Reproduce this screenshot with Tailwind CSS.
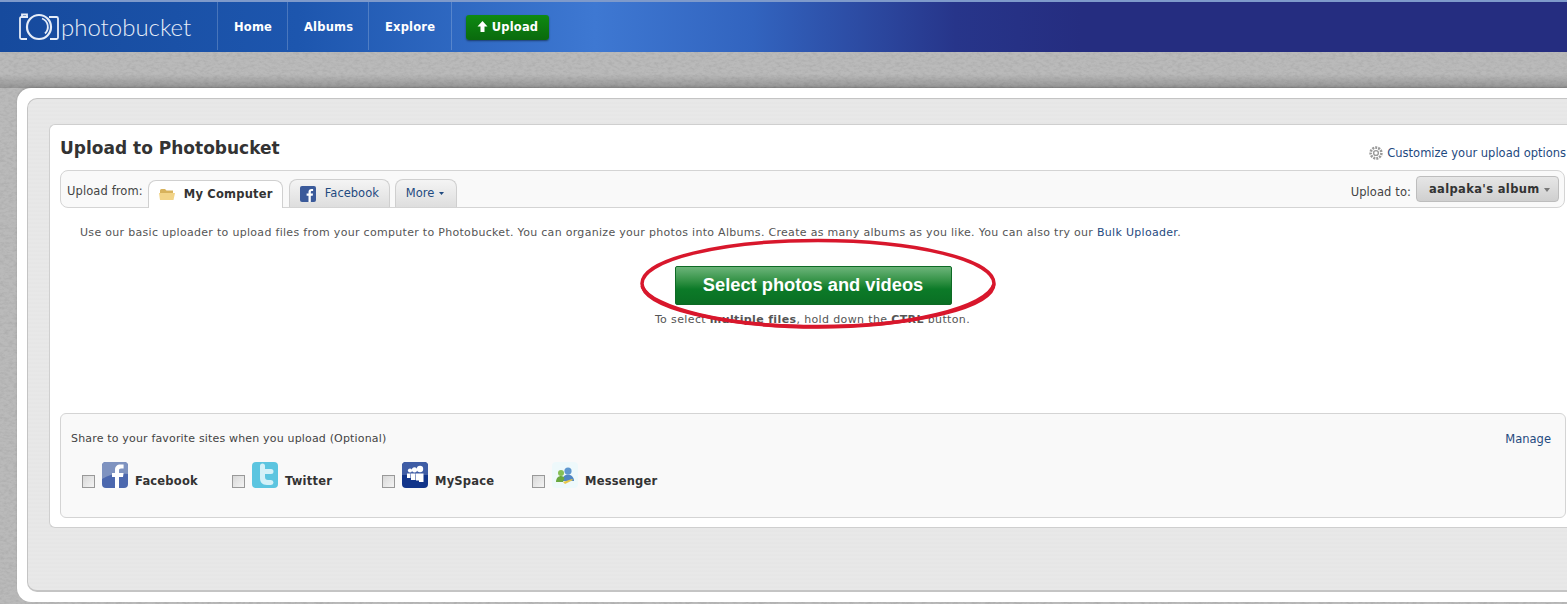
<!DOCTYPE html>
<html lang="en">
<head>
<meta charset="utf-8">
<title>Upload to Photobucket</title>
<script src="https://cdn.jsdelivr.net/npm/@tailwindcss/browser@4"></script>
</head>
<body class="relative w-[1567px] h-[604px] overflow-hidden bg-[#bababa] font-['DejaVu_Sans',sans-serif] text-[#444]">
<svg class="absolute inset-0 pointer-events-none" width="1567" height="604" aria-hidden="true">
  <defs>
    <filter id="grain" x="0" y="0" width="100%" height="100%">
      <feTurbulence type="fractalNoise" baseFrequency="0.22 0.4" numOctaves="5" seed="7"/>
      <feColorMatrix type="matrix" values="0 0 0 0 0.4  0 0 0 0 0.4  0 0 0 0 0.4  1.6 0 0 0 -0.62"/>
    </filter>
    <linearGradient id="fade" x1="0" y1="0" x2="0" y2="1">
      <stop offset="0" stop-color="#000" stop-opacity="0"/>
      <stop offset="1" stop-color="#000" stop-opacity=".2"/>
    </linearGradient>
  </defs>
  <rect width="1567" height="604" filter="url(#grain)"/>
  <rect y="74" width="1567" height="14" fill="url(#fade)"/>
</svg>

<header class="relative h-[52px] border-t-2 border-[#7e9acb] bg-[linear-gradient(90deg,#164a9d_0%,#1d56ae_19%,#3e78d2_38%,#3264bf_48%,#27358a_61%,#252d80_69%,#252d80_100%)] flex items-center">
  <div class="w-[217px] h-full flex items-center pl-[19px] gap-[2px] shrink-0">
    <svg width="40" height="28" viewBox="0 0 40 28" fill="none" stroke="#e6edf8" stroke-width="1.800" class="shrink-0">
      <path d="M9 4H2.500Q1 4 1 5.500V24.500Q1 26 2.500 26H8M30 4H37.500Q39 4 39 5.500V24.500Q39 26 37.500 26H31M3 4V1.500H8V4"/>
      <circle cx="20" cy="14" r="12" stroke-width="2.200"/>
      <path d="M23 5.500a9 9 0 0 1 3 15" stroke-width="1.800"/>
    </svg>
    <span class="font-['Lato',sans-serif] font-light text-[24px] leading-none text-[#e6edf8]">photobucket</span>
  </div>
  <nav class="flex h-[48px] text-white font-bold text-[11.500px] tracking-[0.2px] self-start">
    <a class="w-[70px] border-l border-white/20 flex items-center pl-[16px] pt-[3px]">Home</a>
    <a class="w-[81px] border-l border-white/20 flex items-center pl-[16px] pt-[3px]">Albums</a>
    <a class="w-[83px] border-l border-white/20 flex items-center pl-[16px] pt-[3px]">Explore</a>
    <div class="border-l border-white/20 flex items-center pl-[14px]">
      <button class="w-[83px] h-[25px] mt-[3px] rounded-[3px] bg-[linear-gradient(#0e8a12,#0a6a0d)] shadow-[0_1px_2px_rgba(0,0,0,.45)] flex items-center justify-center gap-[4px] font-bold text-[11.500px] text-white">
        <svg width="11" height="11" viewBox="0 0 11 11" fill="#fff" class="-mt-[3px]"><path d="M5.500 0 10.500 5.500H7.500V11H3.500V5.500H.5Z"/></svg>
        Upload
      </button>
    </div>
  </nav>
</header>

<main class="relative mt-[36px] ml-[17px] h-[514px] rounded-l-[14px] bg-white pt-[10px] pl-[10px] pb-[10px] shadow-[0_-1px_2px_rgba(0,0,0,.15)]">
  <div class="h-full rounded-l-[10px] border-t border-l border-b-2 border-[#c4c4c4] bg-[repeating-linear-gradient(0deg,#e8e8e8_0px,#e8e8e8_2px,#e4e4e4_3px,#e9e9e9_4px)] pt-[25px] pl-[21px]">
    <section class="relative h-[404px] bg-white rounded-l-[6px] border-t border-l border-b border-[#cfcfcf] pl-[10px] pr-[1px]">
      <div class="h-[45px] flex items-start justify-between">
        <h1 class="mt-[11px] font-bold text-[17px] leading-[24px] text-[#333]">Upload to Photobucket</h1>
        <a class="mt-[19px] flex items-center gap-[4px] text-[11.500px] leading-[18px] text-[#1f4a80]">
          <svg width="14" height="14" viewBox="0 0 14 14" fill="none" stroke="#9a9a9a">
            <circle cx="7" cy="7" r="5.400" stroke-width="2.600" stroke-dasharray="2 1"/>
            <circle cx="7" cy="7" r="2.400" stroke-width="1.400"/>
          </svg>
          Customize your upload options
        </a>
      </div>
      <div class="h-[38px] rounded-[8px] border border-[#d4d4d4] bg-[#f9f9f9] flex items-end justify-between pl-[6px] pr-[5px] mr-[1px]">
        <div class="flex items-end h-full">
          <span class="self-start mt-[13px] text-[11.500px] leading-[14px] tracking-[0.1px] text-[#444] mr-[5px]">Upload from:</span>
          <div class="w-[135px] h-[28px] -mb-[1px] rounded-t-[8px] border border-b-0 border-[#d0d0d0] bg-white flex items-center pl-[10px] gap-[9px] text-[11.500px] tracking-[0.2px] font-bold text-[#333]">
            <svg width="16" height="13" viewBox="0 0 16 13" class="shrink-0"><path d="M1 2.500A1.500 1.500 0 0 1 2.500 1H6L7.500 2.500H14V12H1Z" fill="#d7b25c"/><path d="M0 5H16L14.500 12H1Z" fill="#f2d488"/></svg>
            My Computer
          </div>
          <div class="ml-[6px] w-[101px] h-[28px] rounded-t-[8px] border border-b-0 border-[#cfcfcf] bg-[linear-gradient(#f4f4f4,#dedede)] flex items-center pl-[10px] gap-[9px] text-[11.500px] text-[#1f4a80]">
            <svg width="16" height="16" viewBox="0 0 16 16" class="shrink-0"><rect width="16" height="16" rx="2" fill="#3b5a9a"/><path d="M10.800 16V9.800H12.700L13 7.500H10.800V6.200C10.800 5.500 11 5.100 12 5.100H13.100V3.100C12.700 3 12.100 3 11.400 3 9.700 3 8.500 4 8.500 5.900V7.500H6.600V9.800H8.500V16Z" fill="#fff"/></svg>
            Facebook
          </div>
          <div class="ml-[5px] w-[62px] h-[28px] rounded-t-[8px] border border-b-0 border-[#cfcfcf] bg-[linear-gradient(#f4f4f4,#dedede)] flex items-center pl-[10px] gap-[5px] text-[11.500px] text-[#1f4a80]">
            More
            <svg width="5" height="3" viewBox="0 0 5 3" fill="#1f4a80"><path d="M0 0H5L2.500 3Z"/></svg>
          </div>
        </div>
        <div class="flex items-center h-full">
          <span class="text-[11.500px] tracking-[0.1px] text-[#444] mr-[5px] mt-[8px]">Upload to:</span>
          <div class="w-[143px] h-[26px] rounded-[4px] border border-[#bdbdbd] bg-[linear-gradient(#e6e6e6,#cfcfcf)] flex items-center justify-between pl-[12px] pr-[8px] pt-[2px] text-[11.500px] tracking-[0.35px] font-bold text-[#333]">
            aalpaka's album
            <svg width="6" height="4" viewBox="0 0 6 4" fill="#777"><path d="M0 0H6L3 4Z"/></svg>
          </div>
        </div>
      </div>
      <p class="mt-[17px] ml-[20px] text-[11px] tracking-[0.3px] leading-[16px] text-[#555] whitespace-nowrap">Use our basic uploader to upload files from your computer to Photobucket. You can organize your photos into Albums. Create as many albums as you like. You can also try our <a class="text-[#1f4a80]">Bulk Uploader</a>.</p>
      <div class="flex flex-col items-center w-[1505px] mt-[25px] relative">
        <button class="w-[277px] h-[39px] ml-[1px] pb-[2px] rounded-[2px] bg-[linear-gradient(#6cb47a_0%,#2f8f42_40%,#0c7a28_60%,#0a6f24_100%)] border border-[#0e6a25] font-['Liberation_Sans',sans-serif] font-bold text-[18.300px] text-white">Select photos and videos</button>
        <p class="mt-[7px] text-[11px] tracking-[0.37px] leading-[16px] text-[#555]">To select <b>multiple files</b>, hold down the <b>CTRL</b> button.</p>
      </div>
      <div class="absolute left-[10px] top-[288px] w-[1506px] h-[105px] rounded-[6px] border border-[#d4d4d4] bg-[#f9f9f9] pl-[10px] pt-[17px]">
        <div class="flex justify-between pr-[14px] text-[11px] tracking-[0.17px] leading-[16px]">
          <span class="text-[#444]">Share to your favorite sites when you upload (Optional)</span>
          <a class="text-[#1f4a80] text-[11.500px] tracking-normal">Manage</a>
        </div>
        <ul class="flex mt-[15px] pl-[11px] text-[11.500px] tracking-[0.2px] font-bold text-[#333]">
          <li class="w-[150px] flex items-start gap-[7px]">
            <span class="mt-[13px] size-[13px] border border-[#999] bg-[linear-gradient(135deg,#d8d8d8,#f4f4f4)]"></span>
            <svg width="26" height="26" viewBox="0 0 26 26"><rect width="26" height="26" rx="4" fill="#4c68ae"/><path d="M0 4a4 4 0 0 1 4-4h18a4 4 0 0 1 4 4v8Q12 10 0 17Z" fill="#7f93c0"/><path d="M17 26V15h4l.6-4H17V8.500c0-1.300.5-2 2-2h2.600V2.600C21 2.500 19.800 2.400 18.400 2.400 15 2.400 13 4.300 13 7.800V11H10v4h3v11Z" fill="#fff"/></svg>
            <span class="mt-[11px]">Facebook</span>
          </li>
          <li class="w-[150px] flex items-start gap-[7px]">
            <span class="mt-[13px] size-[13px] border border-[#999] bg-[linear-gradient(135deg,#d8d8d8,#f4f4f4)]"></span>
            <svg width="26" height="26" viewBox="0 0 26 26"><rect width="26" height="26" rx="4" fill="#5cc5e0"/><path d="M8 4a2.500 2.500 0 0 1 5 0v3h6a2.500 2.500 0 0 1 0 5h-6v3c0 2 1 3 3 3h3a2.500 2.500 0 0 1 0 5h-4c-5 0-7-3-7-7Z" fill="#d4f1f8"/></svg>
            <span class="mt-[11px]">Twitter</span>
          </li>
          <li class="w-[150px] flex items-start gap-[7px]">
            <span class="mt-[13px] size-[13px] border border-[#999] bg-[linear-gradient(135deg,#d8d8d8,#f4f4f4)]"></span>
            <svg width="26" height="26" viewBox="0 0 26 26"><rect width="26" height="26" rx="4" fill="#12358a"/><path d="M0 4a4 4 0 0 1 4-4h18a4 4 0 0 1 4 4v9H0Z" fill="#3f5da5"/><g fill="#fff"><circle cx="18" cy="7" r="3.200"/><circle cx="12.500" cy="7.800" r="2.600"/><circle cx="8" cy="8.500" r="2.100"/><path d="M14 11.500h7.500V20H17v-1.500h-3ZM9 11.500h4.500V18H9ZM5 11.500h3.500V16H5Z"/></g></svg>
            <span class="mt-[11px]">MySpace</span>
          </li>
          <li class="w-[150px] flex items-start gap-[7px]">
            <span class="mt-[13px] size-[13px] border border-[#999] bg-[linear-gradient(135deg,#d8d8d8,#f4f4f4)]"></span>
            <svg width="26" height="26" viewBox="0 0 26 26"><rect width="26" height="26" rx="4" fill="#eef9fb"/><circle cx="16" cy="9" r="3.600" fill="#5f97cf"/><path d="M10 19c0-4 3-6.500 6-6.500s6 2.500 6 6.500Z" fill="#4f86c4"/><circle cx="9" cy="11" r="3" fill="#86bf55"/><path d="M4 20c0-4 2.500-6 5-6 2 0 3 1 3.500 2l-1.500 4Z" fill="#6aa83f"/><path d="M11 20l9-3 1 1-8 4Z" fill="#e8c74a"/></svg>
            <span class="mt-[11px]">Messenger</span>
          </li>
        </ul>
      </div>
    </section>
  </div>
</main>

<svg class="absolute left-[638px] top-[236px] pointer-events-none" width="362" height="96" viewBox="0 0 362 96" fill="none" aria-hidden="true">
  <ellipse cx="180" cy="47.500" rx="176" ry="43" stroke="#d8172c" stroke-width="3.500"/>
  <path d="M4 50C12 72 90 91 180 91 268 91 350 72 356 48" stroke="#d8172c" stroke-width="3.500"/>
</svg>
</body>
</html>
